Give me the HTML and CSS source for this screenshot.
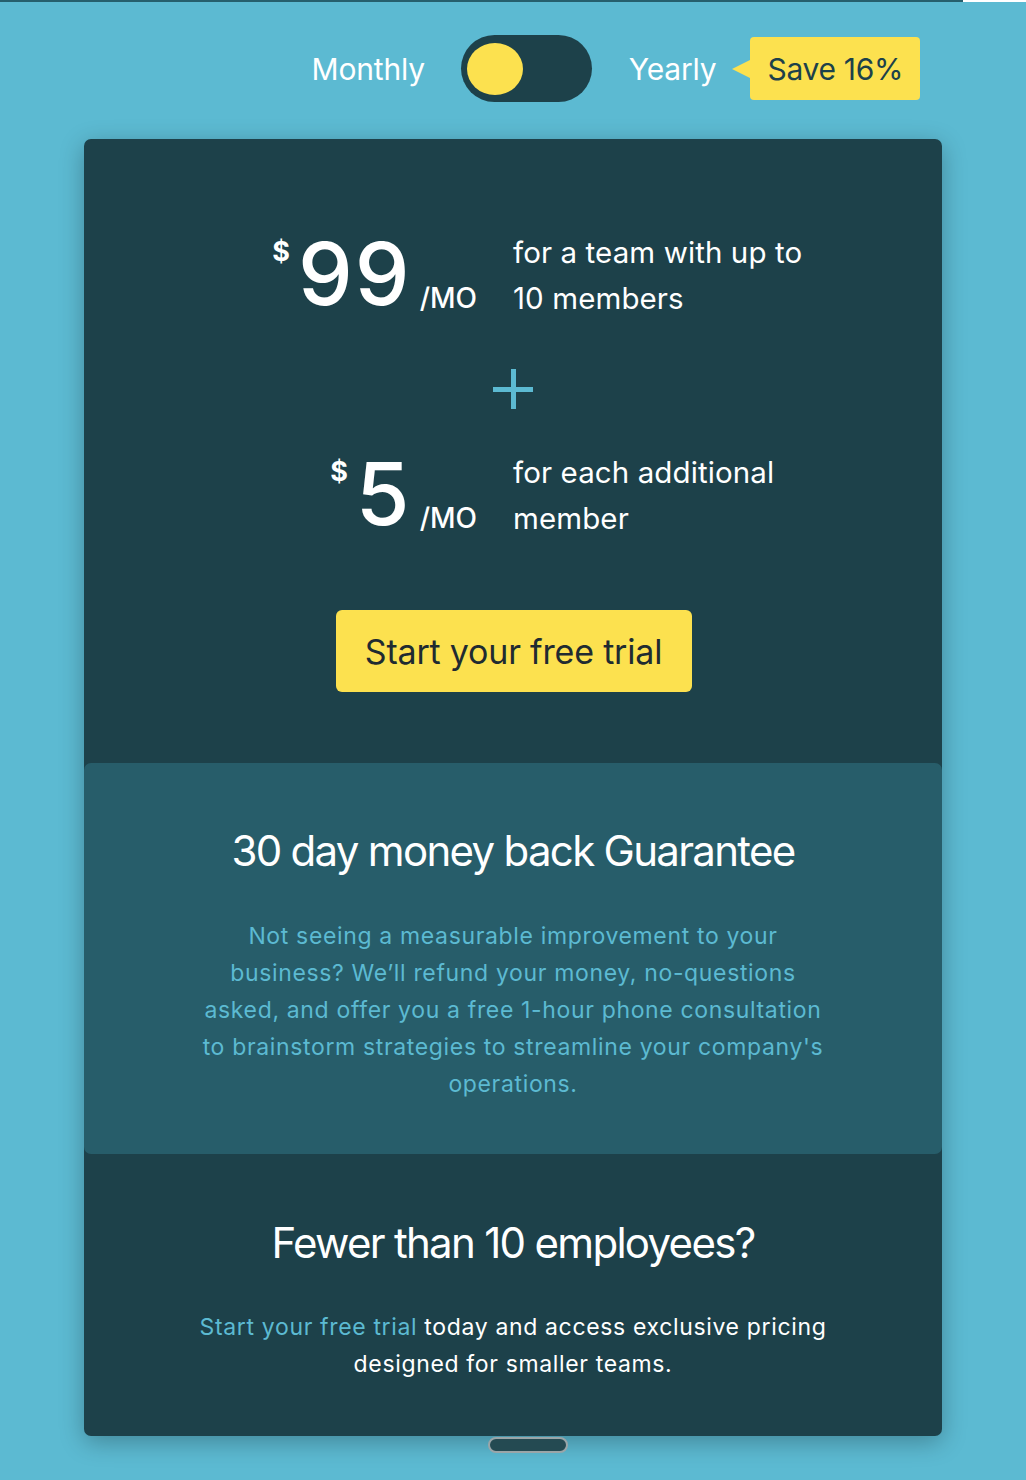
FILE: index.html
```html
<!DOCTYPE html>
<html>
<head>
<meta charset="utf-8">
<link rel="stylesheet" href="styles.css">
</head>
<body>
<div class="topbar"></div>
<div class="billing">
  <span class="billing-label">Monthly</span>
  <div class="toggle"><span class="knob"></span></div>
  <span class="billing-label yearly">Yearly</span>
  <span class="pointer"></span>
  <span class="badge">Save 16%</span>
</div>
<div class="card">
  <div class="pricing">
    <div class="price-row">
      <div class="price"><span class="cur">$</span><span class="amount">99</span><span class="per">/MO</span></div>
      <div class="desc">for a team with up to<br>10 members</div>
    </div>
    <div class="plus"></div>
    <div class="price-row">
      <div class="price"><span class="cur">$</span><span class="amount">5</span><span class="per">/MO</span></div>
      <div class="desc">for each additional<br>member</div>
    </div>
    <div class="cta-wrap"><button class="cta">Start your free trial</button></div>
  </div>
  <div class="guarantee">
    <h2 class="heading">30 day money back Guarantee</h2>
    <p class="guarantee-text">Not seeing a measurable improvement to your business? We’ll refund your money, no-questions asked, and offer you a free 1-hour phone consultation to brainstorm strategies to streamline your company's operations.</p>
  </div>
  <div class="small-teams">
    <h2 class="heading">Fewer than 10 employees?</h2>
    <p class="small-text"><span class="link">Start your free trial</span> today and access exclusive pricing designed for smaller teams.</p>
  </div>
  <div class="handle"></div>
</div>
</body>
</html>
```

FILE: styles.css
```css
* { box-sizing: border-box; }
html, body { margin: 0; padding: 0; }
body {
  background: #5cbad2;
  font-family: Inter, "Noto Sans", sans-serif;
  color: #fff;
  height: 1480px;
  overflow: hidden;
}
.topbar {
  height: 2px;
  background: linear-gradient(to right, #265f6d 0, #265f6d 963px, #ffffff 963px);
}
.billing {
  display: flex;
  align-items: center;
  justify-content: center;
  padding-left: 206px;
  margin-top: 33px;
  height: 67px;
}
.billing-label {
  font-size: 30px;
  color: #fff;
  letter-spacing: -0.2px;
}
.toggle {
  width: 131px;
  height: 67px;
  border-radius: 34px;
  background: #1d414a;
  margin: 0 37px 0 36px;
  display: flex;
  align-items: center;
  padding-left: 6px;
}
.knob {
  width: 56px;
  height: 52px;
  border-radius: 50%;
  background: #fce14f;
}
.pointer {
  width: 0;
  height: 0;
  border-top: 9px solid transparent;
  border-bottom: 9px solid transparent;
  border-right: 18px solid #fce14f;
  margin-left: 16px;
}
.badge {
  background: #fce14f;
  color: #1d414a;
  font-size: 30px;
  height: 63px;
  width: 170px;
  display: flex;
  align-items: center;
  justify-content: center;
  border-radius: 4px;
  letter-spacing: -0.3px;
}
.card {
  position: relative;
  width: 858px;
  margin: 37px auto 0;
  background: #1d414a;
  border-radius: 7px;
  box-shadow: 0 6px 24px rgba(0, 0, 0, 0.28);
}
.pricing {
  padding: 98px 0 71px;
}
.price-row {
  display: grid;
  grid-template-columns: 1fr 1fr;
}
.price {
  display: flex;
  justify-content: flex-end;
  align-items: flex-end;
  padding-right: 36px;
  height: 82px;
}
.cur {
  align-self: flex-start;
  font-size: 27px;
  font-weight: 700;
  margin-top: -2px;
  margin-right: 8px;
}
.amount {
  font-size: 87px;
  font-weight: 500;
  line-height: 1;
  letter-spacing: 2px;
  margin-bottom: 2px;
}
.per {
  font-size: 28px;
  font-weight: 500;
  margin-left: 8px;
  line-height: 1;
  margin-bottom: 7px;
}
.desc {
  font-size: 29.5px;
  line-height: 46px;
  margin-top: -8px;
  letter-spacing: 0.1px;
}
.plus {
  position: relative;
  width: 40px;
  height: 40px;
  margin: 48px auto 48px;
}
.plus::before, .plus::after {
  content: "";
  position: absolute;
  background: #5cbad2;
}
.plus::before { left: 0; top: 18px; width: 40px; height: 5px; }
.plus::after { left: 18px; top: 0; width: 5px; height: 40px; }
.cta-wrap {
  display: flex;
  justify-content: center;
  margin-top: 69px;
}
.cta {
  width: 356px;
  height: 82px;
  border: none;
  border-radius: 6px;
  background: #fce14f;
  color: #1f2b31;
  font-family: Inter, "Noto Sans", sans-serif;
  font-size: 34px;
  letter-spacing: -0.2px;
  margin-left: 1px;
}
.guarantee {
  background: #275d6a;
  border-radius: 7px;
  height: 391px;
  padding-top: 58px;
  text-align: center;
}
.heading {
  margin: 0;
  font-size: 42px;
  font-weight: 400;
  letter-spacing: -1.7px;
  line-height: 60px;
  color: #fff;
}
.guarantee-text {
  margin: 37px auto 0;
  width: 640px;
  font-size: 23px;
  line-height: 37px;
  letter-spacing: 0.65px;
  color: #5cbad2;
}
.small-teams {
  padding: 59px 0 53px;
  text-align: center;
}
.small-text {
  margin: 36px auto 0;
  width: 660px;
  font-size: 23px;
  line-height: 37px;
  letter-spacing: 0.65px;
  color: #fff;
}
.link { color: #5cbad2; }
.handle {
  position: absolute;
  left: 404px;
  bottom: -17px;
  width: 80px;
  height: 16px;
  border-radius: 8px;
  background: #244a52;
  border: 2px solid #9aa5a8;
}
```
